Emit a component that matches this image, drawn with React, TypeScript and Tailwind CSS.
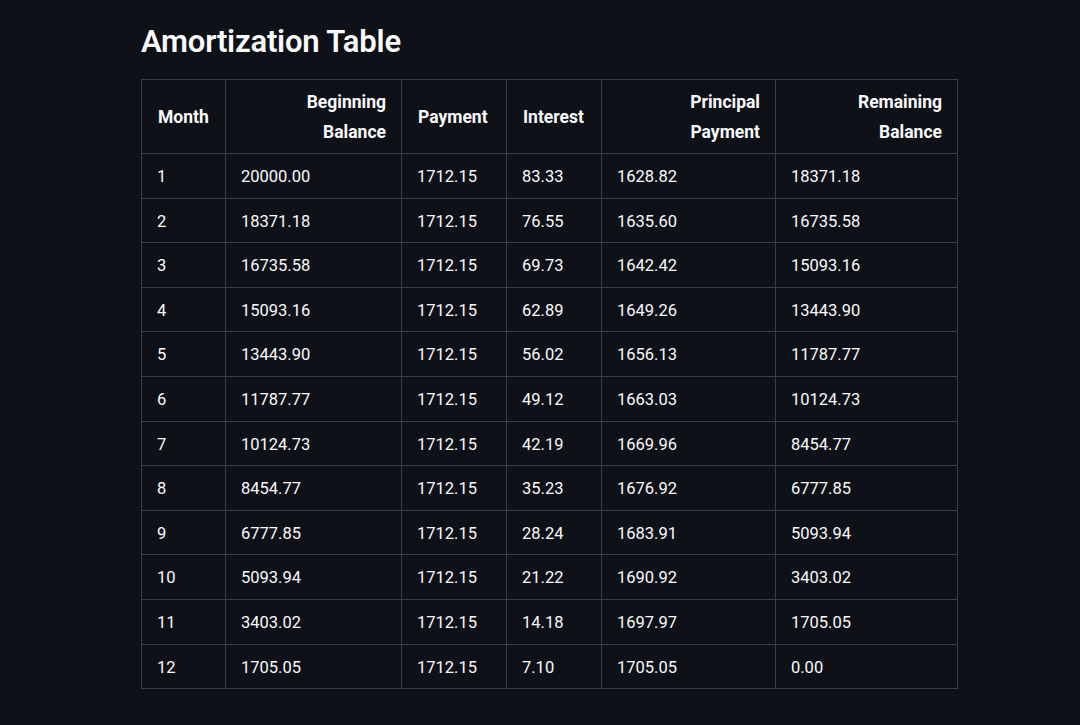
const headers = [
  { label: ["Month"], right: false, w: "w-[84px]" },
  { label: ["Beginning", "Balance"], right: true, w: "w-[176px]" },
  { label: ["Payment"], right: false, w: "w-[105px]" },
  { label: ["Interest"], right: false, w: "w-[95px]" },
  { label: ["Principal", "Payment"], right: true, w: "w-[174px]" },
  { label: ["Remaining", "Balance"], right: true, w: "w-[182px]" },
];

const rows = [
  ["1", "20000.00", "1712.15", "83.33", "1628.82", "18371.18"],
  ["2", "18371.18", "1712.15", "76.55", "1635.60", "16735.58"],
  ["3", "16735.58", "1712.15", "69.73", "1642.42", "15093.16"],
  ["4", "15093.16", "1712.15", "62.89", "1649.26", "13443.90"],
  ["5", "13443.90", "1712.15", "56.02", "1656.13", "11787.77"],
  ["6", "11787.77", "1712.15", "49.12", "1663.03", "10124.73"],
  ["7", "10124.73", "1712.15", "42.19", "1669.96", "8454.77"],
  ["8", "8454.77", "1712.15", "35.23", "1676.92", "6777.85"],
  ["9", "6777.85", "1712.15", "28.24", "1683.91", "5093.94"],
  ["10", "5093.94", "1712.15", "21.22", "1690.92", "3403.02"],
  ["11", "3403.02", "1712.15", "14.18", "1697.97", "1705.05"],
  ["12", "1705.05", "1712.15", "7.10", "1705.05", "0.00"],
];

export default function App() {
  return (
    <div className="min-h-screen bg-[#0e1117] text-[#fafafa] font-['Roboto',sans-serif] pl-[141px] pt-[22px]">
      {/* Title */}
      <h2 className="text-[31px] font-semibold leading-[40px] tracking-[-0.2px]">
        Amortization Table
      </h2>

      {/* Table */}
      <table className="mt-[17px] w-[817px] table-fixed border-collapse text-[16.5px]">
        <thead>
          <tr>
            {headers.map((h, i) => (
              <th
                key={i}
                className={`${h.w} border border-[#3a3d45] pl-4 pr-[15px] pt-[7px] pb-[6px] align-middle text-[17.5px] font-bold leading-[30px] ${
                  h.right ? "text-right" : "text-left"
                }`}
              >
                {h.label.map((l, j) => (
                  <div key={j}>{l}</div>
                ))}
              </th>
            ))}
          </tr>
        </thead>
        <tbody>
          {rows.map((r, i) => (
            <tr key={i}>
              {r.map((c, j) => (
                <td
                  key={j}
                  className="border border-[#3a3d45] pl-[15px] pr-4 pt-[10px] pb-[8px] leading-[25.6px] text-left align-middle"
                >
                  {c}
                </td>
              ))}
            </tr>
          ))}
        </tbody>
      </table>
    </div>
  );
}
